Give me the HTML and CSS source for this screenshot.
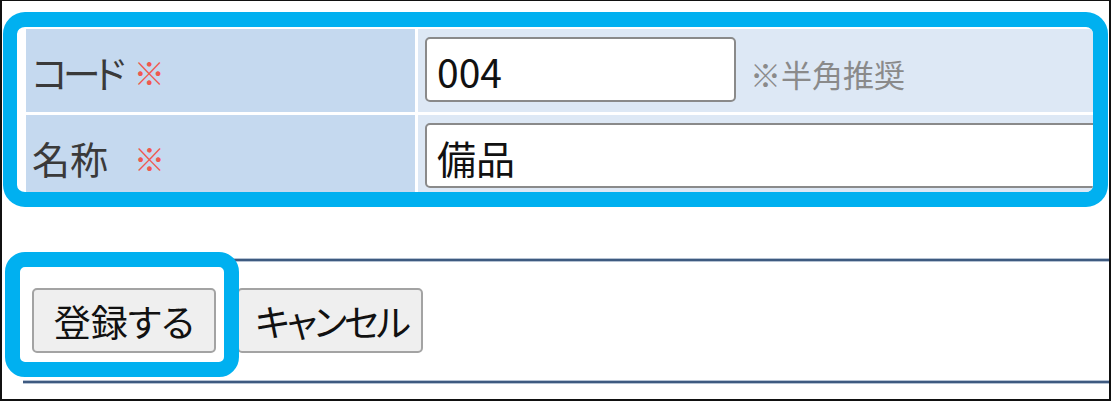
FILE: index.html
```html
<!DOCTYPE html>
<html lang="ja">
<head>
<meta charset="utf-8">
<title>登録フォーム</title>
<link rel="stylesheet" href="styles.css">
</head>
<body>
<div class="frame">
  <div class="hl">
    <div class="form">
      <div class="label"><span class="label-kana">コード</span><span class="req">※</span></div>
      <div class="value">
        <input class="field field-code" type="text" value="004">
        <span class="note">※半角推奨</span>
      </div>
      <div class="label">名称<span class="req req-wide">※</span></div>
      <div class="value">
        <input class="field field-name" type="text" value="備品">
      </div>
    </div>
  </div>
  <div class="rule rule-top"></div>
  <div class="actions">
    <span class="hl-btn"><button class="btn" type="button">登録する</button></span>
    <button class="btn btn-cancel" type="button">キャンセル</button>
  </div>
  <div class="rule rule-bottom"></div>
</div>
</body>
</html>
```
FILE: styles.css
```css
* { box-sizing: border-box; }
html, body { margin: 0; background: #fff; }
body { font-family: "Noto Sans CJK JP", "Noto Sans", sans-serif; }

.frame {
  width: 1111px;
  height: 401px;
  border: 2px solid #111;
  border-top-width: 1px;
  overflow: hidden;
}

.hl {
  margin: 11px 1px 0 1px;
  height: 195px;
  border: 15px solid #00b0f0;
  border-left-width: 14px;
  border-radius: 22px;
  padding: 2px 0 0 9px;
  overflow: hidden;
  background: #fff;
}

.form {
  display: grid;
  grid-template-columns: 389px 700px;
  grid-auto-rows: 83px;
  gap: 3px;
  width: 1092px;
}

.label {
  background: #c5d9ef;
  display: flex;
  align-items: center;
  padding: 2px 0 0 6px;
  font-size: 38px;
  color: #3a3a3a;
  font-feature-settings: "palt";
}
.label-kana { letter-spacing: -5px; }

.req {
  color: #f0584f;
  font-size: 31px;
  margin-left: 13px;
}
.req-wide { margin-left: 26px; }

.value {
  background: #dde8f5;
  display: flex;
  align-items: flex-start;
  padding: 8px 0 0 7px;
}

.field {
  height: 65px;
  border: 2px solid #8a8a8a;
  border-radius: 5px;
  background: #fff;
  font: 39px "Noto Sans CJK JP", "Noto Sans", sans-serif;
  color: #111;
  padding: 2px 10px 0;
  outline: none;
}
.field-code { width: 311px; }
.field-name { width: 690px; }

.note {
  font-size: 31px;
  color: #8a8a8a;
  margin: 14px 0 0 14px;
}

.rule {
  height: 2px;
  margin-left: 21px;
  background: #3e5a80;
  box-shadow: 0 -1px 0 #b5c2d3, 0 1px 0 #b5c2d3;
}
.rule-top { margin-top: 52px; }
.rule-bottom { margin-top: 28px; }

.actions {
  display: flex;
  gap: 21px;
  padding: 27px 0 0 9px;
  margin-left: 21px;
}

.hl-btn {
  position: relative;
  z-index: 1;
  display: flex;
}
.hl-btn::before {
  content: "";
  position: absolute;
  inset: -36px -23px -24px -27px;
  border: 15px solid #00b0f0;
  border-radius: 20px;
  background: #fff;
  z-index: -1;
}

.btn {
  width: 184px;
  height: 65px;
  border: 2px solid #a3a3a3;
  border-radius: 5px;
  background: #efefef;
  font: 37px "Noto Sans CJK JP", "Noto Sans", sans-serif;
  font-feature-settings: "palt";
  color: #111;
  padding: 0;
}
.btn-cancel {
  width: 186px;
  letter-spacing: -3px;
  padding-left: 3px;
}
```
